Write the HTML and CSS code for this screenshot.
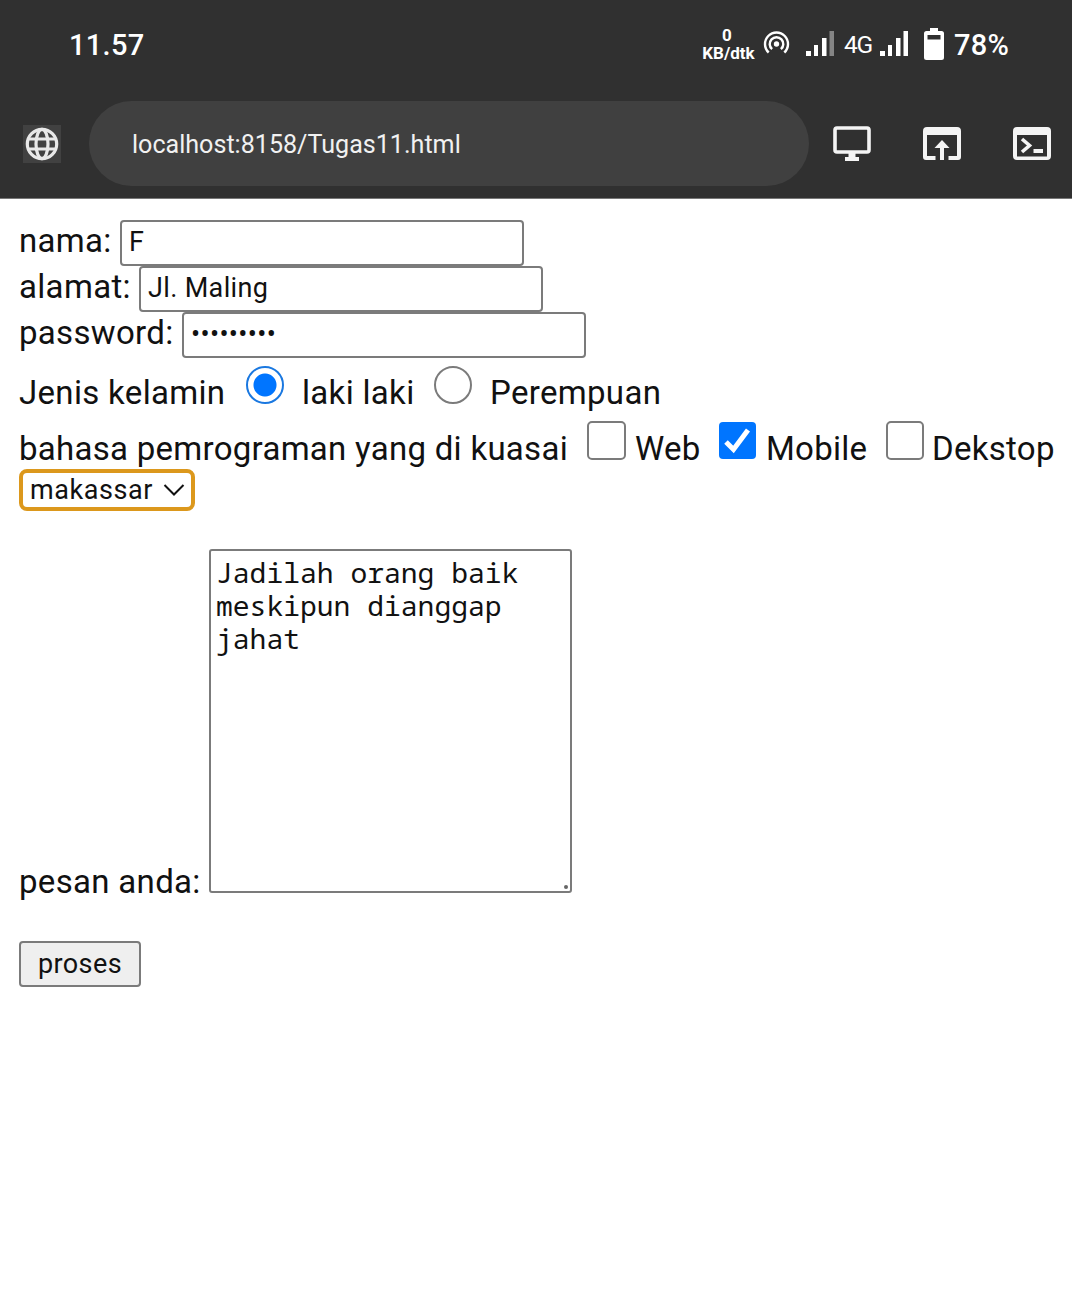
FILE: index.html
```html
<!DOCTYPE html>
<html lang="id">
<head>
<meta charset="utf-8">
<title>Tugas 11</title>
<link rel="stylesheet" href="styles.css">
</head>
<body>
<header class="chrome">
  <div class="status">
    <span class="clock">11.57</span>
    <span class="rate"><span>0</span><span>KB/dtk</span></span>
    <svg class="hotspot" width="28" height="26" viewBox="0 0 28 26" fill="none" stroke="#fff" stroke-width="2.4">
      <circle cx="13.500" cy="13" r="2.7" fill="#fff" stroke="none"/>
      <path d="M9.100 18.200a6.8 6.8 0 1 1 8.8 0M5.700 21.500a11.5 11.5 0 1 1 15.6 0"/>
    </svg>
    <svg class="signal" width="28" height="26" viewBox="0 0 28 26" fill="#fff">
      <path d="M0 20h5v5H0zM8 14h4v11H8zM16 7h4.500v18H16z"/><path d="M23.500 0H28v25h-4.500z" fill="#858585"/>
    </svg>
    <span class="net">4G</span>
    <svg class="signal2" width="28" height="26" viewBox="0 0 28 26" fill="#fff">
      <path d="M0 20h5v5H0zM8 14h4v11H8zM16 7h4.500v18H16zM23.500 0H28v25h-4.500z"/>
    </svg>
    <svg class="battery" width="20" height="33" viewBox="0 0 20 33">
      <path d="M6 0h8v3h3.500Q20 3 20 5.500v24Q20 32 17.500 32h-15Q0 32 0 29.500v-24Q0 3 2.500 3H6z" fill="#fff"/>
      <path d="M3.500 7h13v4.500h-13z" fill="#303030"/>
    </svg>
    <span class="percent">78%</span>
  </div>
  <div class="toolbar">
    <span class="site">
      <svg width="34" height="34" viewBox="0 0 34 34" fill="none" stroke="#e8e8e8" stroke-width="3.200">
        <circle cx="17" cy="17" r="14.700"/><ellipse cx="17" cy="17" rx="6" ry="14.700"/><path d="M3.500 12h27M3.500 22h27"/>
      </svg>
    </span>
    <div class="address">localhost:8158/Tugas11.html</div>
    <svg class="tool desktop" width="38" height="36" viewBox="0 0 38 36">
      <rect x="2" y="2" width="34" height="24" rx="2" fill="none" stroke="#f4f4f4" stroke-width="3.600"/>
      <path d="M15.500 27h7v4H26v4H12v-4h3.500z" fill="#f4f4f4"/>
    </svg>
    <svg class="tool" width="38" height="36" viewBox="0 0 38 36" fill="#f4f4f4">
      <path d="M4 1h30q4 0 4 4v26q0 3-3 3h-9.500v-4H34V9H4v21h8.500v4H3q-3 0-3-3V5q0-4 4-4z"/>
      <path d="M19 14l7.500 8H21v12h-4V22h-5.500z"/>
    </svg>
    <svg class="tool" width="38" height="36" viewBox="0 0 38 36">
      <path d="M4 1h30q4 0 4 4v25q0 4-4 4H4q-4 0-4-4V5q0-4 4-4zm0 8v21.500h30V9z" fill="#f4f4f4" fill-rule="evenodd"/>
      <path d="M9 13l7.500 6.500L9 26" fill="none" stroke="#f4f4f4" stroke-width="3.600"/>
      <path d="M20.500 23H30v4h-9.500z" fill="#f4f4f4"/>
    </svg>
  </div>
</header>
<form class="form">
  <div class="row"><label class="w-nama" for="nama">nama:</label><input class="field" id="nama" type="text" value="F"></div>
  <div class="row"><label class="w-alamat" for="alamat">alamat:</label><input class="field" id="alamat" type="text" value="Jl. Maling"></div>
  <div class="row"><label class="w-password" for="sandi">password:</label><input class="field secret" id="sandi" type="password" value="rahasia11"></div>
  <div class="choices gender">
    <span class="w-jenis">Jenis kelamin</span>
    <input class="radio" id="laki" type="radio" name="jk" checked><label class="w-laki" for="laki">laki laki</label>
    <input class="radio" id="perempuan" type="radio" name="jk"><label for="perempuan">Perempuan</label>
  </div>
  <div class="choices skills">
    <span class="w-bahasa">bahasa pemrograman yang di kuasai</span>
    <input class="check" id="web" type="checkbox"><label class="w-web" for="web">Web</label>
    <span class="checked"><svg width="37" height="37" viewBox="0 0 37 37"><path d="M7 20l7.500 7.500L29 8" fill="none" stroke="#fff" stroke-width="5"/></svg></span><label class="w-mobile">Mobile</label>
    <input class="check last" id="dekstop" type="checkbox"><label for="dekstop">Dekstop</label>
  </div>
  <div class="select"><span>makassar</span>
    <svg width="22" height="14" viewBox="0 0 22 14" fill="none" stroke="#111" stroke-width="2"><path d="M1.500 2l9.500 9.500L20.500 2"/></svg>
  </div>
  <div class="message">
    <label class="w-pesan" for="pesan">pesan anda:</label>
    <div class="area"><textarea id="pesan" spellcheck="false">Jadilah orang baik
meskipun dianggap
jahat</textarea><i class="grip"></i></div>
  </div>
  <button class="submit" type="button">proses</button>
</form>
</body>
</html>
```
FILE: styles.css
```css
* { box-sizing: border-box; }
body { margin: 0; background: #fff; color: #111; font-family: Roboto, "Liberation Sans", sans-serif; }
svg { display: block; flex: none; }
.chrome { height: 199px; background: #303030; border-bottom: 1px solid #777; color: #fff; overflow: hidden; }
.status { height: 101px; display: flex; align-items: flex-start; padding-left: 69px; white-space: nowrap; }
.clock { width: 633px; padding-top: 28px; font-size: 29px; line-height: 34px; font-weight: 500; letter-spacing: .3px; }
.rate { width: 53px; padding-top: 27px; display: flex; flex-direction: column; align-items: center; font-size: 17px; line-height: 18px; font-weight: 700; }
.rate span:first-child { margin: -1px 3px 0 0; }
.hotspot { margin: 31px 0 0 8px; }
.signal { margin: 31px 0 0 15px; }
.net { width: 36px; padding: 30px 0 0 10px; font-size: 24.500px; line-height: 30px; letter-spacing: -1.200px; }
.signal2 { margin: 31px 0 0 10px; }
.battery { margin: 28px 0 0 16px; }
.percent { margin-left: 10px; padding-top: 28px; font-size: 29px; line-height: 34px; font-weight: 500; letter-spacing: .3px; }
.toolbar { display: flex; align-items: center; height: 85px; padding-left: 23px; }
.site { flex: none; width: 38px; height: 38px; display: flex; align-items: center; justify-content: center; background: #414141; }
.address { flex: none; width: 720px; height: 85px; margin: 0 24px 0 28px; padding-left: 43px; border-radius: 43px; background: #404040; color: #f1f1f1; font-size: 25.100px; line-height: 88px; }
.tool { margin-right: 52px; }
.form { padding: 21px 0 0 19px; font-size: 33px; line-height: 40px; letter-spacing: .32px; white-space: nowrap; }
.row { display: flex; height: 46px; }
.row label { flex: none; padding-top: 1px; }
.field { width: 404px; height: 46px; margin: 0; padding: 0 0 2px 7px; border: 2px solid #7b7b7b; border-radius: 4px; background: #fff; color: #111; font: 27px/36px Roboto, sans-serif; letter-spacing: .35px; }
.w-nama { width: 101px; }
.w-alamat { width: 120px; }
.w-password { width: 163px; }
.choices { display: flex; }
.choices label, .choices span { flex: none; }
.gender { height: 56px; padding-top: 8px; }
.skills { height: 55px; padding-top: 7px; }
.gender > span, .gender > label { padding-top: 7px; }
.skills > span, .skills > label { padding-top: 8px; letter-spacing: .28px; }
.w-jenis { width: 227px; }
.w-laki { width: 132px; }
.w-bahasa { width: 568px; }
.w-web { width: 84px; }
.w-mobile { width: 120px; }
.radio { appearance: none; width: 38px; height: 38px; margin: 0 18px 0 0; border: 2px solid #7b7b7b; border-radius: 50%; flex: none; }
.radio:checked { border-color: #1a78e0; background: radial-gradient(circle, #0075ff 11px, #fff 12px); }
.check { appearance: none; width: 39px; height: 39px; margin: 0 9px 0 0; border: 2.500px solid #7b7b7b; border-radius: 5px; flex: none; }
.last { width: 38px; margin-right: 8px; }
.skills > .checked { width: 37px; height: 37px; margin: 1px 10px 0 0; padding: 0; border-radius: 4px; background: #0075ff; }
.select { display: flex; align-items: center; width: 176px; height: 42px; padding: 0 0 1px 7px; border: 4px solid #dc981c; border-radius: 8px; font-size: 27px; line-height: 34px; }
.select span { width: 133px; letter-spacing: .55px; }
.message { display: flex; align-items: flex-end; height: 382px; }
.w-pesan { width: 190px; line-height: 38px; margin-bottom: -8px; }
.area { position: relative; width: 363px; height: 344px; }
.area textarea { display: block; width: 100%; height: 100%; margin: 0; padding: 5px; border: 2px solid #7b7b7b; border-radius: 3px; resize: none; overflow: hidden; color: #111; font: 28px/33px "Noto Sans Mono", "DejaVu Sans Mono", monospace; }
.grip { position: absolute; right: 4px; bottom: 4px; width: 4px; height: 4px; border-radius: 50%; background: #666; }
.submit { display: block; width: 122px; height: 46px; margin: 48px 0 0; padding: 0; border: 2px solid #7b7b7b; border-radius: 4px; background: #efefef; color: #111; font: 27px/36px Roboto, sans-serif; letter-spacing: .4px; }
```
